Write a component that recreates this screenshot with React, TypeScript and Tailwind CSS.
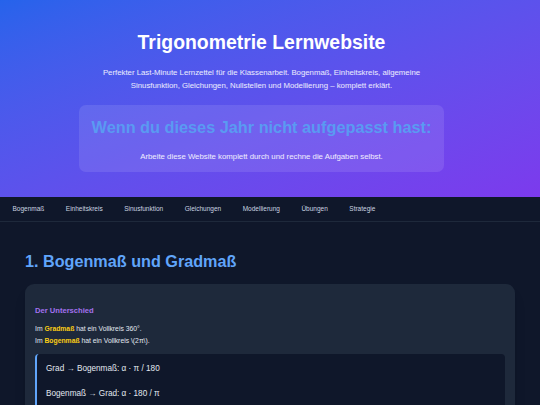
import React from 'react';

const navItems = [
  'Bogenmaß',
  'Einheitskreis',
  'Sinusfunktion',
  'Gleichungen',
  'Modellierung',
  'Übungen',
  'Strategie',
];

const App: React.FC = () => {
  return (
    <div className="min-h-screen bg-[#0f172a] font-['Liberation_Sans',Arial,sans-serif]">
      {/* Hero */}
      <header className="h-[197px] bg-gradient-to-br from-[#2563eb] to-[#7c3aed] pt-[30px]">
        <div className="flex flex-col items-center pr-[17px] text-center">
          <h1 className="text-[19.4px] font-bold leading-[24px] text-white">Trigonometrie Lernwebsite</h1>
          <p className="mt-[11.5px] max-w-[345px] text-[7.8px] leading-[13px] text-white/90">
            Perfekter Last-Minute Lernzettel für die Klassenarbeit. Bogenmaß, Einheitskreis, allgemeine
            Sinusfunktion, Gleichungen, Nullstellen und Modellierung – komplett erklärt.
          </p>
          <div className="mt-[13.5px] w-[365px] rounded-[7px] bg-white/10 pb-[9px] pt-[12px]">
            <h2 className="text-[16.3px] font-bold leading-[20px] text-[#5a9af2]">
              Wenn du dieses Jahr nicht aufgepasst hast:
            </h2>
            <p className="mt-[14px] text-[7.8px] leading-[12px] text-white/90">
              Arbeite diese Website komplett durch und rechne die Aufgaben selbst.
            </p>
          </div>
        </div>
      </header>

      {/* Navigation */}
      <nav className="flex h-[25px] items-center gap-[21.5px] border-b border-[#1e293b] bg-[#0f172a] pl-[12.5px]">
        {navItems.map((item) => (
          <a key={item} className="text-[6.5px] text-[#cbd5e1]">
            {item}
          </a>
        ))}
      </nav>

      {/* Inhalt */}
      <main className="px-[25px] pb-10">
        <h2 className="mt-[29px] text-[16.2px] font-bold leading-[20px] text-[#60a5fa]">1. Bogenmaß und Gradmaß</h2>

        <div className="mt-[13px] rounded-[9px] bg-[#1e293b] px-[10px] pb-[12px] pt-[22px] shadow-lg">
          <h3 className="text-[7.6px] font-bold leading-[10px] text-[#a371ee]">Der Unterschied</h3>
          <p className="mt-[7px] text-[6.8px] leading-[12px] text-[#e2e8f0]">
            Im <strong className="text-[#facc15]">Gradmaß</strong> hat ein Vollkreis 360°.
            <br />
            Im <strong className="text-[#facc15]">Bogenmaß</strong> hat ein Vollkreis \(2π\).
          </p>

          <div className="mt-[7px] rounded-[4px] border-l-2 border-[#60a5fa] bg-[#0f172a] pb-[30px] pl-[9px] pt-[9px]">
            <p className="text-[8.2px] leading-[12px] text-[#e2e8f0]">Grad → Bogenmaß: α · π / 180</p>
            <p className="mt-[13px] text-[8.2px] leading-[12px] text-[#e2e8f0]">Bogenmaß → Grad: α · 180 / π</p>
          </div>
        </div>
      </main>
    </div>
  );
};

export default App;
